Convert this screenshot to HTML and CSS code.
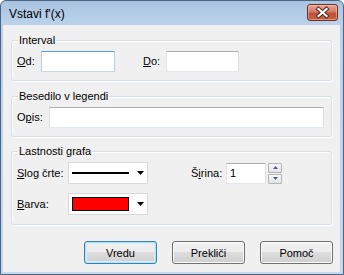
FILE: index.html
```html
<!DOCTYPE html>
<html lang="sl">
<head>
<meta charset="utf-8">
<title>Vstavi f'(x)</title>
<link rel="stylesheet" href="styles.css">
</head>
<body>
<div class="window">
  <div class="titlebar">
    <span class="title">Vstavi f'(x)</span>
    <button class="close" type="button" aria-label="Zapri">
      <svg width="31" height="17" viewBox="0 0 31 17">
        <path d="M11.5 5 L19.5 12 M19.5 5 L11.5 12" stroke="#5a2a22" stroke-width="4.2" stroke-linecap="square" fill="none"/>
        <path d="M11.5 5 L19.5 12 M19.5 5 L11.5 12" stroke="#ffffff" stroke-width="2.2" stroke-linecap="square" fill="none"/>
      </svg>
    </button>
  </div>
  <div class="client">
    <div class="group g-interval">
      <div class="legend">Interval</div>
      <div class="row">
        <label class="lbl w-od"><u>O</u>d:</label>
        <input class="edit focused w-from" type="text">
        <label class="lbl w-do"><u>D</u>o:</label>
        <input class="edit w-to" type="text">
      </div>
    </div>
    <div class="group g-legend">
      <div class="legend">Besedilo v legendi</div>
      <div class="row">
        <label class="lbl w-opis">O<u>p</u>is:</label>
        <input class="edit w-opis-in" type="text">
      </div>
    </div>
    <div class="group g-props">
      <div class="legend">Lastnosti grafa</div>
      <div class="props">
        <div class="row">
          <label class="lbl w-prop"><u>S</u>log črte:</label>
          <div class="combo">
            <span class="line-sample"></span>
            <svg class="arrow" width="7" height="4" viewBox="0 0 7 4"><polygon points="0,0 7,0 3.5,4" fill="#000"/></svg>
          </div>
          <label class="lbl w-width">Š<u>i</u>rina:</label>
          <input class="edit w-num" type="text" value="1">
          <div class="spin">
            <button class="spin-btn" type="button" aria-label="Gor"><svg width="5" height="3" viewBox="0 0 5 3"><polygon points="2.5,0 5,3 0,3" fill="#4d5f86"/></svg></button>
            <button class="spin-btn" type="button" aria-label="Dol"><svg width="5" height="3" viewBox="0 0 5 3"><polygon points="0,0 5,0 2.5,3" fill="#4d5f86"/></svg></button>
          </div>
        </div>
        <div class="row">
          <label class="lbl w-prop"><u>B</u>arva:</label>
          <div class="combo">
            <span class="color-sample"></span>
            <svg class="arrow" width="7" height="4" viewBox="0 0 7 4"><polygon points="0,0 7,0 3.5,4" fill="#000"/></svg>
          </div>
        </div>
      </div>
    </div>
    <div class="buttons">
      <button class="btn default" type="button">Vredu</button>
      <button class="btn" type="button">Prekliči</button>
      <button class="btn" type="button">Pomoč</button>
    </div>
  </div>
</div>
</body>
</html>
```
FILE: styles.css
```css
* { box-sizing: border-box; }
html, body { margin: 0; padding: 0; }
body {
  width: 344px;
  height: 275px;
  overflow: hidden;
  background: #ffffff;
  font-family: "Liberation Sans", Arial, sans-serif;
  font-size: 11px;
  color: #000;
}
.window {
  width: 344px;
  height: 275px;
  border: 1px solid #4a6584;
  border-radius: 6px 6px 0 0;
  background: linear-gradient(#a9c3e0, #b9d1ea 22px, #c4d9ee);
  padding: 0 3px 2px 2px;
  display: flex;
  flex-direction: column;
}
.titlebar {
  height: 24px;
  display: flex;
  align-items: flex-start;
  justify-content: space-between;
  padding: 0 2px 0 6px;
  flex: none;
}
.title {
  margin-top: 6px;
  font-size: 12px;
  line-height: 14px;
  color: #000;
}
.close {
  margin-top: 3px;
  width: 31px;
  height: 17px;
  padding: 0;
  border: 1px solid #6e2b20;
  border-radius: 3px;
  background: linear-gradient(#e6a592, #d27a64 45%, #c34f38 55%, #c8603f);
  box-shadow: inset 0 0 0 1px rgba(255, 220, 210, 0.45);
  display: flex;
  align-items: center;
  justify-content: center;
}
.close svg { display: block; margin: -1px; }
.client {
  flex: 1;
  background: #f0f0f0;
  padding: 15px 8px 0 8px;
  display: flex;
  flex-direction: column;
}
.group {
  border: 1px solid #d5dfe5;
  border-radius: 3px;
  padding: 0 5px 8px 5px;
  display: flex;
  flex-direction: column;
  box-shadow: 1px 1px 0 #fff, inset 1px 1px 0 #fff;
}
.g-legend { margin-top: 15px; }
.g-props { margin-top: 14px; padding-bottom: 9px; }
.legend {
  align-self: flex-start;
  margin: -7px 0 0 1px;
  padding: 0 1px;
  background: #f0f0f0;
  line-height: 13px;
}
.row {
  display: flex;
  align-items: center;
  margin-top: 4px;
  line-height: 13px;
}
.lbl { flex: none; white-space: nowrap; }
.w-od { width: 24px; }
.w-do { width: 23px; margin-left: 28px; }
.w-opis { width: 32px; }
.w-prop { width: 51px; }
.w-width { width: 35px; margin-left: 43px; }
.edit {
  flex: none;
  height: 21px;
  margin: 0;
  padding: 0 3px;
  border: 1px solid;
  border-color: #abadb3 #dbdfe6 #e3e9ef #e2e3ea;
  background: #fff;
  font: 11px "Liberation Sans", Arial, sans-serif;
  color: #000;
  outline: none;
}
.edit.focused { border-color: #569de5 #b5cfe7 #c5daed #b5cfe7; }
.w-from { width: 74px; }
.w-to { width: 73px; }
.w-opis-in { width: 275px; }
.w-num { width: 40px; height: 21px; }
.props { display: flex; flex-direction: column; }
.props .row + .row { margin-top: 9px; }
.combo {
  flex: none;
  width: 80px;
  height: 22px;
  border: 1px solid #d9d9d9;
  background: #fff;
  display: flex;
  align-items: center;
  padding: 0 3px;
}
.line-sample {
  width: 57px;
  height: 2px;
  background: #000;
}
.color-sample {
  width: 57px;
  height: 14px;
  margin-top: -1px;
  border: 1px solid #000;
  background: #ff0000;
}
.arrow { margin-left: auto; display: block; }
.spin {
  margin-left: 2px;
  display: flex;
  flex-direction: column;
  gap: 1px;
}
.spin-btn {
  width: 14px;
  height: 10px;
  padding: 0;
  border: 1px solid #b5b5b5;
  border-radius: 1px;
  background: linear-gradient(#f6f6f6, #e4e4e4);
  display: flex;
  align-items: center;
  justify-content: center;
}
.spin-btn svg { display: block; }
.buttons {
  margin-top: 16px;
  margin-right: -1px;
  display: flex;
  justify-content: flex-end;
  gap: 15px;
}
.btn {
  width: 73px;
  height: 23px;
  padding: 0;
  border: 1px solid #707070;
  border-radius: 3px;
  background: linear-gradient(#f2f2f2 0, #ebebeb 50%, #dddddd 50%, #cfcfcf 100%);
  box-shadow: inset 0 0 0 1px #fbfbfb;
  font: 11px "Liberation Sans", Arial, sans-serif;
  color: #000;
}
.btn.default {
  border-color: #3c7fb1;
  box-shadow: inset 0 0 0 1px #b4e2f8, inset 0 0 0 2px #d4effb;
}
```
